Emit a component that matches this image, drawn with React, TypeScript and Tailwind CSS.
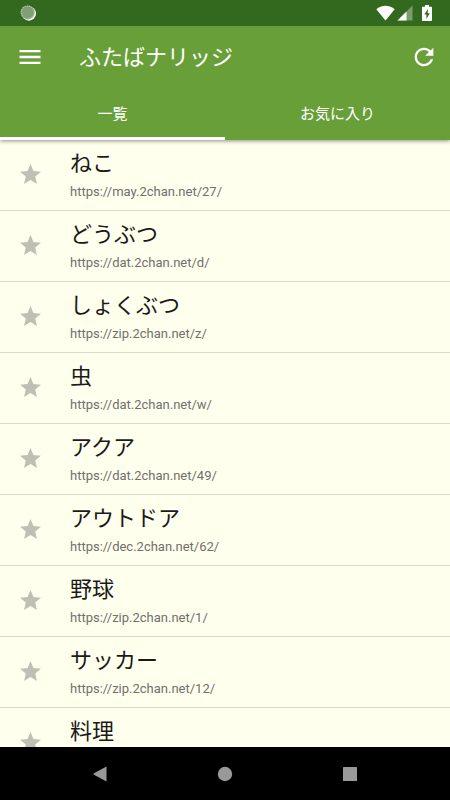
type Board = { name: string; url?: string };

const boards: Board[] = [
  { name: "ねこ", url: "https://may.2chan.net/27/" },
  { name: "どうぶつ", url: "https://dat.2chan.net/d/" },
  { name: "しょくぶつ", url: "https://zip.2chan.net/z/" },
  { name: "虫", url: "https://dat.2chan.net/w/" },
  { name: "アクア", url: "https://dat.2chan.net/49/" },
  { name: "アウトドア", url: "https://dec.2chan.net/62/" },
  { name: "野球", url: "https://zip.2chan.net/1/" },
  { name: "サッカー", url: "https://zip.2chan.net/12/" },
  { name: "料理" },
];

function StatusBar() {
  return (
    <div className="flex h-[26px] items-center justify-between bg-[#33691e] pr-[17px] pl-5">
      <svg className="size-4" viewBox="0 0 16 16" aria-hidden="true">
        <circle cx="8.9" cy="8.6" r="7.1" fill="#fff" />
        <circle cx="7.6" cy="7.4" r="7" fill="#7fa077" />
        <circle
          cx="7.6"
          cy="7.4"
          r="6.4"
          fill="none"
          stroke="#b5c9ae"
          strokeWidth="1.1"
          strokeDasharray="1.1 1.1"
        />
      </svg>
      <div className="flex items-center">
        <svg className="h-4 w-[19px]" viewBox="0 0 19 16" fill="#fff" aria-hidden="true">
          <path d="M9.5 15.5.3 4.2C2.8 2 6 .8 9.5 .8s6.7 1.2 9.2 3.4z" />
        </svg>
        <svg className="ml-[2px] size-4" viewBox="0 0 16 16" fill="#fff" aria-hidden="true">
          <path d="M15.5 .5v15H.5z" fillOpacity="0.35" />
          <path d="M9.5 6.5v9H.5z" />
        </svg>
        <svg className="ml-2 h-[18px] w-3" viewBox="0 0 12 18" aria-hidden="true">
          <path
            d="M4 1h4v1.7h2.2c.5 0 .8.3.8.8v12.7c0 .5-.3.8-.8.8H1.8c-.5 0-.8-.3-.8-.8V3.500c0-.5.3-.8.8-.8H4z"
            fill="#fff"
          />
          <path d="M7 5 3.300 10.600h2.100V15l3.400-5.700H6.700z" fill="#33691e" />
        </svg>
      </div>
    </div>
  );
}

function Header() {
  return (
    <header className="relative z-10 bg-[#689f38] text-white shadow-[0_1px_4px_rgba(0,0,0,0.45)]">
      <StatusBar />
      <div className="flex h-[61px] items-center pr-3 pl-4">
        <button type="button" aria-label="メニュー">
          <svg className="size-7" viewBox="0 0 24 24" fill="currentColor">
            <path d="M3 18h18v-2H3v2zm0-5h18v-2H3v2zm0-7v2h18V6H3z" />
          </svg>
        </button>
        <h1 className="ml-[35px] flex-1 pt-0.5 text-[22px] leading-8">ふたばナリッジ</h1>
        <button type="button" aria-label="更新">
          <svg className="size-7" viewBox="0 0 24 24" fill="currentColor">
            <path d="M17.65 6.35C16.2 4.9 14.21 4 12 4c-4.42 0-7.99 3.58-7.99 8s3.57 8 7.99 8c3.73 0 6.84-2.55 7.73-6h-2.08c-.82 2.33-3.04 4-5.65 4-3.31 0-6-2.69-6-6s2.69-6 6-6c1.66 0 3.14.69 4.22 1.78L13 11h7V4l-2.35 2.35z" />
          </svg>
        </button>
      </div>
      <div role="tablist" className="grid h-[53px] grid-cols-2 text-[15px]">
        <button
          type="button"
          role="tab"
          aria-selected="true"
          className="border-b-3 border-white pt-1"
        >
          一覧
        </button>
        <button
          type="button"
          role="tab"
          aria-selected="false"
          className="border-b-3 border-transparent pt-1"
        >
          お気に入り
        </button>
      </div>
    </header>
  );
}

function BoardRow({ name, url }: Board) {
  return (
    <li className="flex h-[71px] items-start border-b border-[#d9dac9] pl-[18px]">
      <button type="button" aria-label={`${name}をお気に入りに追加`} className="mt-[22px]">
        <svg className="size-[25px]" viewBox="0 0 24 24" fill="#bfbfb3">
          <path d="M12 17.27 18.18 21l-1.64-7.03L22 9.24l-7.19-.61L12 2 9.19 8.63 2 9.24l5.46 4.73L5.82 21z" />
        </svg>
      </button>
      <div className="ml-[27px] pt-2">
        <p className="text-[22px] leading-8 text-[#1a1a18]">{name}</p>
        {url && <p className="text-[13px] leading-6 text-[#70706b]">{url}</p>}
      </div>
    </li>
  );
}

function NavigationBar() {
  return (
    <nav className="grid h-[53px] shrink-0 grid-cols-3 items-center justify-items-center bg-black px-[38px]">
      <button type="button" aria-label="戻る">
        <svg className="size-4" viewBox="0 0 16 16" fill="#999">
          <path d="M14.5 .5v15L2 8.700c-.6-.3-.6-1.100 0-1.400z" />
        </svg>
      </button>
      <button type="button" aria-label="ホーム">
        <svg className="size-4" viewBox="0 0 16 16" fill="#999">
          <circle cx="8" cy="8" r="7.2" />
        </svg>
      </button>
      <button type="button" aria-label="最近使ったアプリ">
        <svg className="size-4" viewBox="0 0 16 16" fill="#999">
          <rect x="1" y="1" width="14" height="14" rx="0.5" />
        </svg>
      </button>
    </nav>
  );
}

export default function App() {
  return (
    <div className="flex h-screen flex-col bg-[#ffffee] font-['Roboto','Noto_Sans_CJK_JP',sans-serif]">
      <Header />
      <main className="min-h-0 flex-1 overflow-hidden">
        <ul>
          {boards.map((board) => (
            <BoardRow key={board.name} {...board} />
          ))}
        </ul>
      </main>
      <NavigationBar />
    </div>
  );
}
